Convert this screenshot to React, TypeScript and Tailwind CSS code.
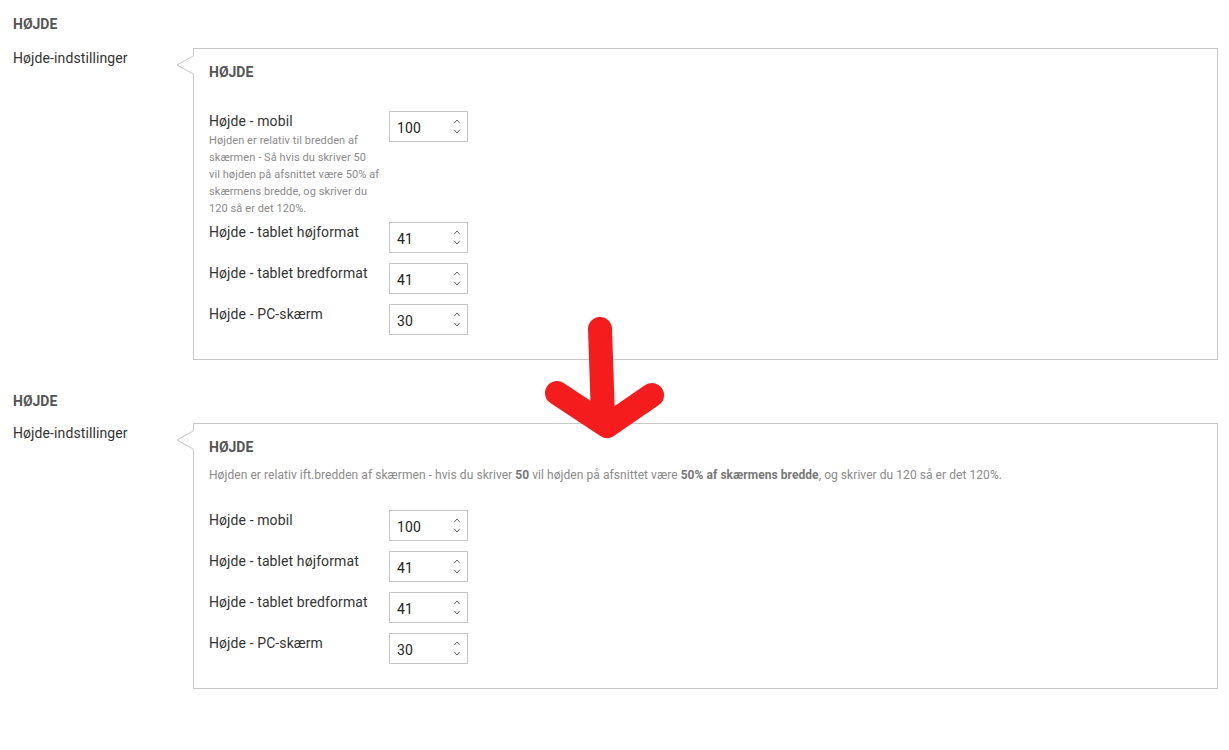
import React from "react";

type Field = { label: string; value: string };

const fields: Field[] = [
  { label: "Højde - mobil", value: "100" },
  { label: "Højde - tablet højformat", value: "41" },
  { label: "Højde - tablet bredformat", value: "41" },
  { label: "Højde - PC-skærm", value: "30" },
];

function NumberBox({ value }: { value: string }) {
  return (
    <div className="flex h-[31px] w-[79px] shrink-0 items-center justify-between border border-[#c4c4c4] bg-white pl-[7px] pr-[6px]">
      <span className="pt-[3px] text-[14px] tracking-[0.1px] text-[#222]">{value}</span>
      <span className="flex flex-col items-center gap-[5px]">
        <svg width="8" height="5" viewBox="0 0 8 5" fill="none">
          <path d="M1.2 4.2 L4 1 L6.8 4.2" stroke="#666" strokeWidth="1" />
        </svg>
        <svg width="8" height="5" viewBox="0 0 8 5" fill="none">
          <path d="M1.2 0.8 L4 4 L6.8 0.8" stroke="#666" strokeWidth="1" />
        </svg>
      </span>
    </div>
  );
}

function Row({ field, hint }: { field: Field; hint?: React.ReactNode }) {
  return (
    <div className="flex items-start">
      <div className="w-[180px] shrink-0">
        <div className="pt-[1px] text-[14px] leading-[18px] tracking-[0.1px] text-[#333]">{field.label}</div>
        {hint}
      </div>
      <NumberBox value={field.value} />
    </div>
  );
}

function Panel({ children }: { children: React.ReactNode }) {
  return (
    <div className="relative flex-1 border border-[#c8c8c8] bg-white px-[15px] pt-[14px]">
      <svg
        className="absolute left-[-18px] top-[6px]"
        width="19"
        height="22"
        viewBox="0 0 19 22"
      >
        <polygon points="18.5,0 1,10 18.5,20" fill="white" />
        <polyline points="18,0.5 1,10 18,19.5" fill="none" stroke="#c8c8c8" strokeWidth="1" />
      </svg>
      <div className="text-[14px] font-bold leading-[18px] text-[#555]">HØJDE</div>
      {children}
    </div>
  );
}

function Section({
  children,
  className,
  rowGap,
}: {
  children: React.ReactNode;
  className?: string;
  rowGap: string;
}) {
  return (
    <div className={className}>
      <div className="pl-[13px] text-[14px] font-bold leading-[18px] text-[#555]">HØJDE</div>
      <div className={`flex pr-[11px] ${rowGap}`}>
        <div className="w-[193px] shrink-0 pl-[13px] pt-[1px] text-[14px] leading-[18px] tracking-[0.1px] text-[#333]">
          Højde-indstillinger
        </div>
        {children}
      </div>
    </div>
  );
}

export default function App() {
  return (
    <div className="relative min-h-[750px] bg-white pt-[15px] font-['Roboto',sans-serif]">
      <Section rowGap="mt-[15px]">
        <Panel>
          <div className="mt-[30px] pb-[24px]">
            <Row
              field={fields[0]}
              hint={
                <p className="mt-[2px] whitespace-nowrap text-[11px] leading-[17px] tracking-[0.08px] text-[#8a8a8a]">
                  Højden er relativ til bredden af
                  <br />
                  skærmen - Så hvis du skriver 50
                  <br />
                  vil højden på afsnittet være 50% af
                  <br />
                  skærmens bredde, og skriver du
                  <br />
                  120 så er det 120%.
                </p>
              }
            />
            <div className="mt-[5px] flex flex-col gap-[10px]">
              {fields.slice(1).map((f) => (
                <Row key={f.label} field={f} />
              ))}
            </div>
          </div>
        </Panel>
      </Section>

      <Section className="mt-[32px]" rowGap="mt-[13px]">
        <Panel>
          <p className="mt-[10px] text-[12px] leading-[18px] tracking-[0.06px] text-[#8a8a8a]">
            Højden er relativ ift.bredden af skærmen - hvis du skriver{" "}
            <b className="text-[#777]">50</b> vil højden på afsnittet være{" "}
            <b className="text-[#777]">50% af skærmens bredde</b>, og skriver du 120 så er det 120%.
          </p>
          <div className="mt-[26px] flex flex-col gap-[10px] pb-[24px]">
            {fields.map((f) => (
              <Row key={f.label} field={f} />
            ))}
          </div>
        </Panel>
      </Section>

      {/* red annotation arrow */}
      <svg
        className="pointer-events-none absolute left-[540px] top-[305px]"
        width="130"
        height="145"
        viewBox="0 0 130 145"
        fill="none"
      >
        <path
          d="M60 24 L63 112 M17 88 L67 121 L112 90"
          stroke="#f41c1c"
          strokeWidth="24"
          strokeLinecap="round"
          strokeLinejoin="round"
        />
      </svg>
    </div>
  );
}
